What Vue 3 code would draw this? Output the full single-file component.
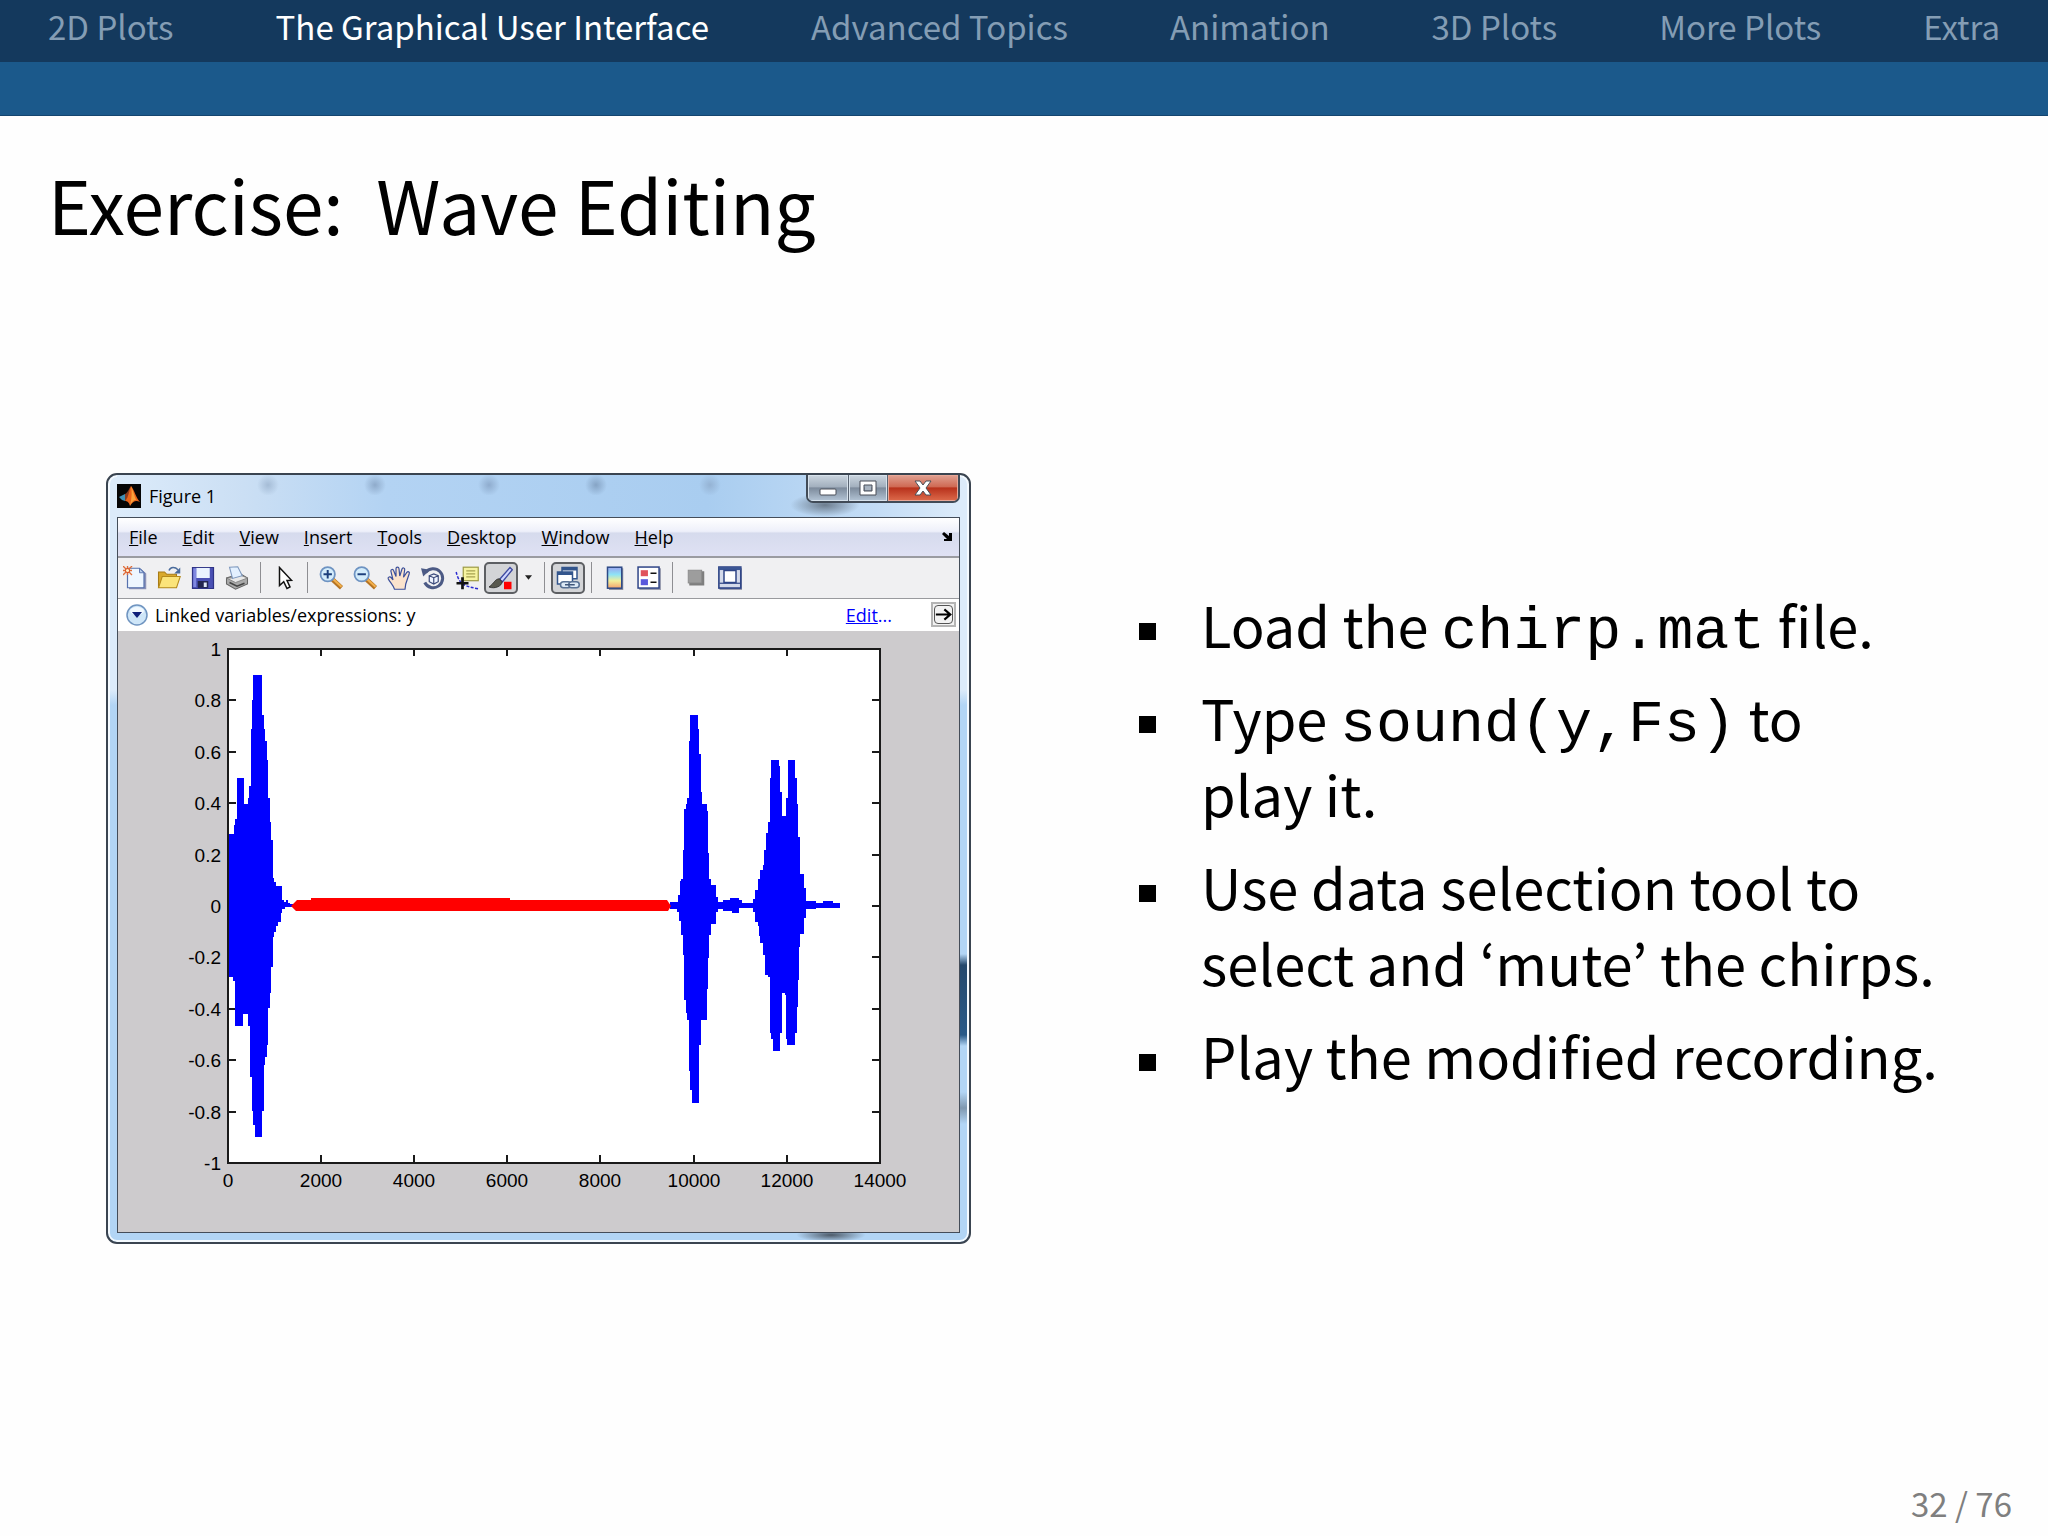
<template>
  <div class="slide">
    <header>
      <nav class="sections">
        <a v-for="s in sections" :key="s" href="#" :class="{ active: s === current }">{{ s }}</a>
      </nav>
      <div class="subbar"></div>
    </header>

    <h1>Exercise:&nbsp; Wave Editing</h1>

    <main>
      <section class="window">
        <div class="title-bar">
          <svg class="logo" viewBox="0 0 24 24">
            <rect width="24" height="24" fill="#050505" />
            <path d="M2 13 L8 10 L11 12 L8 17 L5 16 Z" fill="#3f8fb5" />
            <path d="M8 10 C11 9 12 4 14 2 L12 12 L8 17 Z" fill="#8c3a1c" />
            <path d="M14 2 C17 5 19 14 23 18 C19 16 16 17 13 22 C12 18 10 17 8 17 C12 13 12 6 14 2 Z" fill="#e8641b" />
            <path d="M14 2 C15 7 15 13 13 22 C15 17 17 16 19 16 C17 11 16 6 14 2 Z" fill="#f9a13a" />
          </svg>
          <span class="caption">Figure 1</span>
          <div class="controls">
            <button class="min" aria-label="Minimize">
              <svg viewBox="0 0 18 18"><rect x="1" y="10" width="16" height="6" rx="1" /></svg>
            </button>
            <button class="max" aria-label="Maximize">
              <svg viewBox="0 0 18 18">
                <path fill-rule="evenodd" d="M1 2 H17 V16 H1 Z M5 6 V12 H13 V6 Z" />
                <rect x="6" y="8" width="6" height="3" stroke="none" fill="#aab4c0" />
              </svg>
            </button>
            <button class="close" aria-label="Close">
              <svg viewBox="0 0 18 18">
                <path d="M1 2 H6 L9 6 L12 2 H17 L12 9 L17 16 H12 L9 12 L6 16 H1 L6 9 Z" />
              </svg>
            </button>
          </div>
        </div>

        <div class="client">
          <div class="menu-bar">
            <button v-for="m in menus" :key="m"><u>{{ m[0] }}</u>{{ m.slice(1) }}</button>
            <svg class="dock" viewBox="0 0 11 9">
              <path d="M1 2 L3 0 L8 4 V1 H11 V9 H3 V7 H6 Z" fill="#000" />
            </svg>
          </div>

          <div class="toolbar">
            <button aria-label="New figure">
              <svg viewBox="0 0 16 16">
                <path d="M4 2 H12 L15.500 5 V15.500 H4 Z" fill="#8c93b8" />
                <path d="M3 1.500 H11 L14 4.500 V14.500 H3 Z" fill="#eef6ff" stroke="#5671ad" stroke-width=".8" />
                <path d="M11 1.500 V4.500 H14 Z" fill="#b8cdea" stroke="#5671ad" stroke-width=".6" />
                <path d="M0 0 L6 6 M6 0 L0 6 M3 0 V6 M0 3 H6" stroke="#e0703c" stroke-width=".9" />
                <circle cx="3" cy="3" r="1.400" fill="#fff4cc" stroke="#d9572b" stroke-width=".7" />
              </svg>
            </button>
            <button aria-label="Open">
              <svg viewBox="0 0 16 16">
                <path d="M1 4 H5 L6.500 5.500 H13 V14 H1 Z" fill="#d9a92c" stroke="#a87b16" stroke-width=".7" />
                <path d="M3.500 7 H15.500 L13 14.500 H1 Z" fill="#fbe47a" stroke="#b58a1c" stroke-width=".7" />
                <path d="M8 3 C9 .5 12 .5 14 2.500" fill="none" stroke="#4a6b9c" stroke-width="1" />
                <path d="M15.500 1 V5 H11.500 Z" fill="#4a6b9c" />
              </svg>
            </button>
            <button aria-label="Save">
              <svg viewBox="0 0 16 16">
                <path d="M1 1 H15 V15 H1 Z" fill="#4a50b4" stroke="#2f3386" stroke-width=".8" />
                <path d="M3.500 1.300 H12.500 V8 H3.500 Z" fill="#eaf3ff" />
                <path d="M1.500 1.500 H3.500 V14 H1.500 Z" fill="#7f87e0" />
                <rect x="4.500" y="10" width="7" height="4.600" fill="#23254f" />
                <rect x="8.500" y="11" width="2" height="3" fill="#dfe6f4" />
              </svg>
            </button>
            <button aria-label="Print">
              <svg viewBox="0 0 16 16">
                <path d="M1 8 L10 5 L15 8 V12 L7 15.500 L1 12 Z" fill="#a9a9a9" stroke="#666" stroke-width=".7" />
                <path d="M1 8 L7 11 L15 8 L10 6 L5 8 Z" fill="#e8e8e8" stroke="#777" stroke-width=".5" />
                <path d="M3 .8 L8.500 .5 L11.500 6.500 L5 8.300 Z" fill="#e3f0ff" stroke="#7d97bd" stroke-width=".7" />
                <path d="M3 11 L8 13.500 L13 11.500" fill="none" stroke="#444" stroke-width="1" />
              </svg>
            </button>
            <i class="sep"></i>
            <button aria-label="Edit plot">
              <svg viewBox="0 0 16 16">
                <path d="M5 1 V13 L7.800 10.500 L10 15 L12 14 L10 9.700 L13 9.500 Z" fill="#fff" stroke="#111" stroke-width="1" />
              </svg>
            </button>
            <i class="sep"></i>
            <button aria-label="Zoom in">
              <svg viewBox="0 0 16 16">
                <path d="M9 9 L15 14.500" stroke="#b57323" stroke-width="3" />
                <path d="M9.500 8.800 L15 13.800" stroke="#f2b04c" stroke-width="1.400" />
                <circle cx="5.800" cy="5.500" r="4.800" fill="#d3ecfb" stroke="#6e93c2" stroke-width="1.200" />
                <path d="M3 5.500 H8.600 M5.800 2.700 V8.300" stroke="#1c3f7c" stroke-width="1.300" />
              </svg>
            </button>
            <button aria-label="Zoom out">
              <svg viewBox="0 0 16 16">
                <path d="M9 9 L15 14.500" stroke="#b57323" stroke-width="3" />
                <path d="M9.500 8.800 L15 13.800" stroke="#f2b04c" stroke-width="1.400" />
                <circle cx="5.800" cy="5.500" r="4.800" fill="#d3ecfb" stroke="#6e93c2" stroke-width="1.200" />
                <path d="M3 5.500 H8.600" stroke="#1c3f7c" stroke-width="1.300" />
              </svg>
            </button>
            <button aria-label="Pan">
              <svg viewBox="0 0 16 16">
                <path
                  d="M5 15.500 C4 12.500 2 11 .8 8.500 C.5 7.200 2 6.800 3 8 L4 9.200 L2.600 3.500 C2.400 2.200 4 1.800 4.400 3 L6 7 L6 1.800 C6 .4 7.900 .4 8 1.800 L8.500 6.700 L10 2 C10.400 .8 12 1.200 11.800 2.500 L11 7.500 L13.200 4.300 C14 3.300 15.300 4 14.800 5.200 L12.500 12 L12 15.500 Z"
                  fill="#fbe3cd" stroke="#3b4f9a" stroke-width=".8"
                />
              </svg>
            </button>
            <button aria-label="Rotate 3D">
              <svg viewBox="0 0 16 16">
                <path d="M3 4.500 A6.300 6.300 0 1 1 2.500 11" fill="none" stroke="#4c5a85" stroke-width="2" />
                <path d="M0 1.500 L6 2.500 L1.500 7 Z" fill="#4c5a85" />
                <path d="M5.500 6.500 L8.500 5.300 L11.500 6.500 V10.500 L8.500 12 L5.500 10.500 Z M5.500 6.500 L8.500 7.800 L11.500 6.500 M8.500 7.800 V12" fill="#eef3ff" stroke="#3c4b7c" stroke-width=".8" />
              </svg>
            </button>
            <button aria-label="Data cursor">
              <svg viewBox="0 0 16 16">
                <rect x="5.500" y=".8" width="10" height="9" fill="#f6f3a0" stroke="#9d9a45" stroke-width=".8" />
                <path d="M7.500 3.300 H13.500 M7.500 5.300 H13.500 M7.500 7.300 H13.500" stroke="#a5a150" stroke-width=".8" />
                <path d="M.8 4 C1.500 7 3 11 6 12.500 C9 14 12 14.500 15.500 15.200" fill="none" stroke="#2b2bd0" stroke-width="1" stroke-dasharray="2 1" />
                <path d="M1 11.500 H9 M5 7.500 V15.500" stroke="#111" stroke-width="1.800" />
              </svg>
            </button>
            <button class="pressed" aria-label="Brush">
              <svg viewBox="0 0 16 16">
                <path d="M7 9 L14 1 L15.500 2.500 L9 10.500 Z" fill="#cfd6ff" stroke="#3f4aa0" stroke-width=".9" />
                <path d="M8 9.700 L7 8.500 C4 8.500 3.500 11.500 0 14 C4 15.500 8.500 13.500 8.800 10.500 Z" fill="#59594f" stroke="#222" stroke-width=".5" />
                <rect x="10" y="10.500" width="5" height="5" fill="#f00" />
              </svg>
            </button>
            <button class="drop" aria-label="Brush color">
              <svg viewBox="0 0 8 5"><path d="M0 0 H8 L4 5 Z" fill="#222" /></svg>
            </button>
            <i class="sep"></i>
            <button class="pressed" aria-label="Link plot">
              <svg viewBox="0 0 16 16">
                <rect x="4" y="1" width="10" height="7.500" fill="#fff" stroke="#33558c" />
                <rect x="4" y="1" width="10" height="2" fill="#33558c" />
                <rect x="1" y="4" width="10" height="8" fill="#fff" stroke="#33558c" />
                <rect x="1" y="4" width="10" height="2" fill="#33558c" />
                <rect x="3" y="10.500" width="7" height="4" rx="2" fill="#dde9f5" stroke="#587093" />
                <rect x="8.500" y="10.500" width="7" height="4" rx="2" fill="#dde9f5" stroke="#587093" />
                <path d="M6 12.500 H12.500" stroke="#40577a" stroke-width="1" />
              </svg>
            </button>
            <i class="sep"></i>
            <button aria-label="Colorbar">
              <svg viewBox="0 0 16 16">
                <defs>
                  <linearGradient id="cbar" x1="0" y1="0" x2="0" y2="1">
                    <stop offset="0" stop-color="#9aa4f0" />
                    <stop offset=".35" stop-color="#8fe3f5" />
                    <stop offset=".65" stop-color="#f2ef9a" />
                    <stop offset="1" stop-color="#f3a26c" />
                  </linearGradient>
                </defs>
                <rect x="4" y="1.500" width="9.500" height="14.500" fill="#8d90a0" />
                <rect x="3" y=".8" width="9.500" height="14" fill="url(#cbar)" stroke="#2e4a86" />
              </svg>
            </button>
            <button aria-label="Legend">
              <svg viewBox="0 0 16 16">
                <rect x="1.500" y="1.500" width="14.500" height="14.500" fill="#9a9db0" />
                <rect x=".7" y=".7" width="14" height="14" fill="#fff" stroke="#2f4587" />
                <rect x="2.500" y="2.800" width="4.800" height="4" fill="#e0525c" />
                <rect x="2.500" y="8.800" width="4.800" height="4" fill="#5a58dc" />
                <path d="M9 4.800 H13 M9 10.800 H13" stroke="#111" stroke-width="1.100" />
              </svg>
            </button>
            <i class="sep"></i>
            <button aria-label="Hide plot tools">
              <svg viewBox="0 0 16 16">
                <rect x="3.500" y="3.500" width="10" height="9.500" fill="#7e7e7e" />
                <rect x="2.800" y="2.800" width="9" height="8.500" fill="#9d9d9d" stroke="#8a8a8a" stroke-width=".6" />
              </svg>
            </button>
            <button aria-label="Show plot tools">
              <svg viewBox="0 0 16 16">
                <rect x="1" y="1.500" width="15" height="14.500" fill="#9a9db0" />
                <rect x=".6" y=".7" width="14.600" height="14" fill="#d4daea" stroke="#2f4587" stroke-width="1.100" />
                <rect x=".6" y=".7" width="14.600" height="2" fill="#3c5796" />
                <rect x="4" y="3" width="8" height="8" fill="#fff" stroke="#2f4587" />
                <path d="M1 11.500 H15" stroke="#2f4587" stroke-width=".8" />
              </svg>
            </button>
          </div>

          <div class="linked">
            <button class="round" aria-label="Linked variables">
              <svg viewBox="0 0 22 22">
                <circle cx="11" cy="11" r="10" fill="#cfe6f8" stroke="#6f94c0" stroke-width="1.500" />
                <ellipse cx="11" cy="7" rx="7" ry="4" fill="#f3faff" />
                <path d="M6 8 H16 L11 14 Z" fill="#10207a" />
              </svg>
            </button>
            <span>Linked variables/expressions: y</span>
            <a href="#"><u>Edit</u>...</a>
            <button class="go" aria-label="Expand">
              <svg viewBox="0 0 20 20">
                <path d="M1 10 H17 M11 4 L18 10 L11 16" fill="none" stroke="#000" stroke-width="2.500" />
              </svg>
            </button>
          </div>

          <svg class="plot" viewBox="118 631 841 601">
            <rect x="228" y="649" width="652" height="514" fill="#fff" />
            <g class="axes">
              <template v-for="t in xTicks" :key="t.label">
                <path :d="`M${t.x} 649 V656 M${t.x} 1163 V1155`" />
                <text :x="t.x" y="1187" text-anchor="middle">{{ t.label }}</text>
              </template>
              <template v-for="t in yTicks" :key="t.label">
                <path :d="`M228 ${t.y} H236 M880 ${t.y} H872`" />
                <text x="221" :y="t.y + 7" text-anchor="end">{{ t.label }}</text>
              </template>
            </g>
            <path v-for="(b, i) in bursts" :key="i" :d="burstPath(b)" fill="#00f" />
            <path d="M291 906 L297 900 H311 V898 H510 V900 H667 L671 906 L668 911 H296 Z" fill="#f00" />
            <rect class="box" x="228" y="649" width="652" height="514" />
          </svg>
        </div>
      </section>

      <ul class="steps">
        <li>Load the <code>chirp.mat</code> file.</li>
        <li>Type <code>sound(y,Fs)</code> to<br />play it.</li>
        <li>Use data selection tool to<br />select and ‘mute’ the chirps.</li>
        <li>Play the modified recording.</li>
      </ul>
    </main>

    <footer>32 / 76</footer>
  </div>
</template>

<script setup>
const current = 'The Graphical User Interface';
const sections = ['2D Plots', current, 'Advanced Topics', 'Animation', '3D Plots', 'More Plots', 'Extra'];
const menus = ['File', 'Edit', 'View', 'Insert', 'Tools', 'Desktop', 'Window', 'Help'];

const xTicks = Array.from({ length: 8 }, (_, i) => ({ x: 228 + Math.round(i * 93.1), label: i * 2000 }));
const yTicks = Array.from({ length: 11 }, (_, i) => ({
  y: Math.round(649 + i * 51.4),
  label: (10 - i * 2) / 10,
}));

// each envelope is a list of [right edge, height] steps
const bursts = [
  {
    start: 229,
    top: [
      [234, 834], [235, 825], [237, 819], [244, 778], [248, 804], [249, 798], [251, 786], [252, 729],
      [253, 700], [262, 675], [264, 715], [265, 729], [267, 741], [268, 760], [270, 798], [271, 822],
      [273, 840], [274, 878], [276, 882], [282, 886], [284, 900], [286, 902], [288, 900], [290, 903], [293, 904],
    ],
    bottom: [
      [233, 977], [235, 981], [243, 1026], [248, 1014], [250, 1026], [252, 1077], [253, 1111], [255, 1125],
      [262, 1137], [264, 1111], [265, 1065], [267, 1057], [268, 1045], [270, 1008], [271, 993], [273, 967],
      [274, 937], [276, 932], [278, 926], [281, 922], [282, 913], [285, 909], [293, 907],
    ],
  },
  {
    start: 670,
    top: [
      [678, 902], [680, 895], [681, 881], [683, 879], [684, 850], [686, 809], [687, 804], [689, 798],
      [690, 741], [698, 715], [699, 729], [701, 754], [702, 792], [707, 804], [708, 811], [709, 853],
      [711, 879], [716, 885], [718, 897], [723, 902], [730, 900], [739, 898], [742, 900], [753, 903],
      [755, 899], [758, 890], [760, 879], [763, 870], [764, 865], [766, 850], [768, 833], [770, 822],
      [771, 778], [779, 760], [780, 766], [782, 792], [786, 816], [788, 798], [795, 760], [797, 778],
      [798, 804], [800, 837], [804, 874], [806, 888], [816, 901], [823, 903], [833, 901], [840, 903],
    ],
    bottom: [
      [677, 909], [679, 912], [681, 921], [683, 935], [684, 955], [686, 1000], [687, 1013], [689, 1020],
      [690, 1071], [692, 1090], [699, 1103], [701, 1045], [707, 1020], [708, 989], [709, 958], [711, 935],
      [716, 924], [718, 912], [723, 909], [732, 911], [739, 913], [753, 908], [755, 912], [758, 922],
      [759, 926], [760, 936], [763, 943], [765, 955], [768, 975], [770, 977], [771, 1033], [773, 1039],
      [780, 1051], [782, 1033], [785, 993], [786, 995], [787, 1039], [795, 1045], [797, 1033], [798, 1007],
      [799, 980], [800, 947], [804, 934], [806, 918], [816, 909], [840, 908],
    ],
  },
];

const burstPath = ({ start, top, bottom }) => {
  const steps = (list) => list.map(([x, y]) => `V${y} H${x}`).join(' ');
  return `M${start} 906 ${steps(top)} V906 Z M${start} 906 ${steps(bottom)} V906 Z`;
};
</script>

<style>
body {
  margin: 0;
  background: #fefefe;
}
</style>

<style scoped>
.slide {
  display: flex;
  flex-direction: column;
  min-height: 100vh;
  font-family: 'Noto Sans CJK JP', 'Open Sans', sans-serif;
  color: #000;
}
.sections {
  display: flex;
  justify-content: space-between;
  padding: 6px 48px 16px;
  background: #14395d;
  font-size: 33px;
  line-height: 40px;
}
.sections a {
  color: #849db4;
  text-decoration: none;
}
.sections a.active {
  color: #fff;
}
.subbar {
  height: 53px;
  background: #1b598b;
  border-bottom: 1px solid #14456f;
}
h1 {
  margin: 0;
  padding: 42px 48px 0;
  font-size: 73px;
  font-weight: normal;
  line-height: 90px;
}
main {
  flex: 1;
  display: grid;
  grid-template-columns: 865fr 801fr;
  gap: 168px;
  align-items: center;
  padding: 0 108px 0 106px;
}
footer {
  padding: 15px 36px 13px;
  font-size: 33px;
  line-height: 40px;
  text-align: right;
  color: #7f7f7f;
}

/* text column */
.steps {
  margin: 0;
  padding: 0 0 38px;
  list-style: none;
  font-size: 56px;
  line-height: 76px;
  white-space: nowrap;
}
.steps li {
  display: flow-root;
  padding-left: 62px;
  background: linear-gradient(#000, #000) 0 37px / 17px 17px no-repeat;
}
.steps li + li {
  margin-top: 17px;
}
.steps code {
  font-family: 'Liberation Mono', monospace;
  font-size: 60px;
  line-height: 1;
}

/* figure window */
.window {
  box-sizing: border-box;
  padding: 0 9px 9px;
  border: 2px solid #3a4450;
  border-radius: 11px;
  box-shadow: inset 0 0 0 2px #f4faff;
  background:
    radial-gradient(ellipse, #4d5a68, transparent 70%) 87% 100% / 70px 14px no-repeat,
    linear-gradient(transparent, #24486c 12%, #2a5a88 88%, transparent) 100% 71% / 9px 92px no-repeat,
    linear-gradient(transparent, #7f98b0 50%, transparent) 100% 84% / 9px 32px no-repeat,
    linear-gradient(#dcebfa 28%, #b2d5f5 30%);
  font-family: 'Open Sans', 'Noto Sans', sans-serif;
  font-size: 18px;
}
.window button {
  padding: 0;
  border: 0;
  background: none;
  font: inherit;
  color: inherit;
}
.title-bar {
  display: flex;
  align-items: center;
  gap: 8px;
  height: 42px;
  background:
    radial-gradient(circle, #a5bcd6, transparent 70%) 17% 0 / 24px 20px no-repeat,
    radial-gradient(circle, #8fabcb, transparent 70%) 30% 0 / 24px 20px no-repeat,
    radial-gradient(circle, #8facce, transparent 70%) 44% 0 / 24px 20px no-repeat,
    radial-gradient(circle, #86a4c5, transparent 70%) 57% 0 / 24px 20px no-repeat,
    radial-gradient(circle, #95b3d4, transparent 70%) 71% 0 / 24px 20px no-repeat,
    radial-gradient(ellipse, #6d7d8e, transparent 70%) 87% 100% / 70px 24px no-repeat,
    linear-gradient(to right, #dcebfa, #cbdff4 15%, #b3d3f3 32%, #a9cdf0 70%, #c3dcf5 90%, #dcebfa);
}
.logo {
  width: 24px;
  height: 24px;
}
.caption {
  flex: 1;
}
.controls {
  display: flex;
  align-self: flex-start;
  border: 2px solid #414b57;
  border-top: 0;
  border-radius: 0 0 7px 7px;
  overflow: hidden;
}
.controls button {
  display: flex;
  align-items: center;
  justify-content: center;
  width: 40px;
  height: 26px;
  background: linear-gradient(#ccd6e0, #a3b0be 45%, #7d8b9c 50%, #b4c5d6);
  box-shadow: inset 0 0 0 1px #d7e2ec;
}
.controls .max {
  border-left: 1px solid #596472;
  border-right: 1px solid #596472;
}
.controls .close {
  width: 70px;
  background: linear-gradient(#e0a192, #cf6a54 45%, #b8321c 50%, #dd6b4c);
  box-shadow: inset 0 0 0 1px #e7a797;
}
.controls svg {
  width: 18px;
  height: 18px;
  fill: #fff;
  stroke: #4a4f58;
  stroke-width: 1px;
}
.client {
  border: 1px solid #444d59;
  background: #fff;
}
.menu-bar {
  display: flex;
  align-items: center;
  gap: 25px;
  height: 40px;
  padding: 0 7px 0 11px;
  background: linear-gradient(#fff, #eef0fa 35%, #d6dbed 40%, #dfe1f4);
  border-bottom: 2px solid #9a9ba1;
  box-sizing: border-box;
}
.dock {
  width: 11px;
  margin-left: auto;
}
.toolbar {
  display: flex;
  align-items: center;
  height: 41px;
  border-bottom: 1px solid #999a9e;
  background: #f0f0f2;
  box-sizing: border-box;
}
.toolbar button {
  display: flex;
  align-items: center;
  justify-content: center;
  width: 34px;
  height: 32px;
}
.toolbar svg {
  width: 24px;
  height: 24px;
}
.toolbar .pressed {
  box-sizing: border-box;
  border: 2px solid #5d5f63;
  border-radius: 5px;
  background: #d3d4d7;
}
.toolbar .drop {
  width: 20px;
}
.toolbar .drop svg {
  width: 7px;
  height: 5px;
}
.sep {
  width: 1px;
  height: 31px;
  margin: 0 6px;
  background: #8e8e92;
}
.linked {
  display: flex;
  align-items: center;
  height: 32px;
  padding: 0 3px 0 8px;
}
.linked svg {
  display: block;
}
.round {
  width: 22px;
  margin-right: 7px;
}
.linked a {
  margin-left: auto;
  color: #00f;
  text-decoration: none;
}
.linked .go {
  width: 25px;
  height: 25px;
  margin-left: 39px;
  padding: 1px;
  border: 2px solid #b5b5b5;
  background: #f3f3f3;
}
.go svg {
  border: 1px solid #555;
  border-radius: 4px;
  box-sizing: border-box;
}
.plot {
  display: block;
  width: 100%;
  background: #cdcbcd;
}
.axes path,
.box {
  fill: none;
  stroke: #1a1a1a;
  stroke-width: 2px;
}
.axes text {
  font-family: 'Liberation Sans', sans-serif;
  font-size: 19px;
}
</style>
